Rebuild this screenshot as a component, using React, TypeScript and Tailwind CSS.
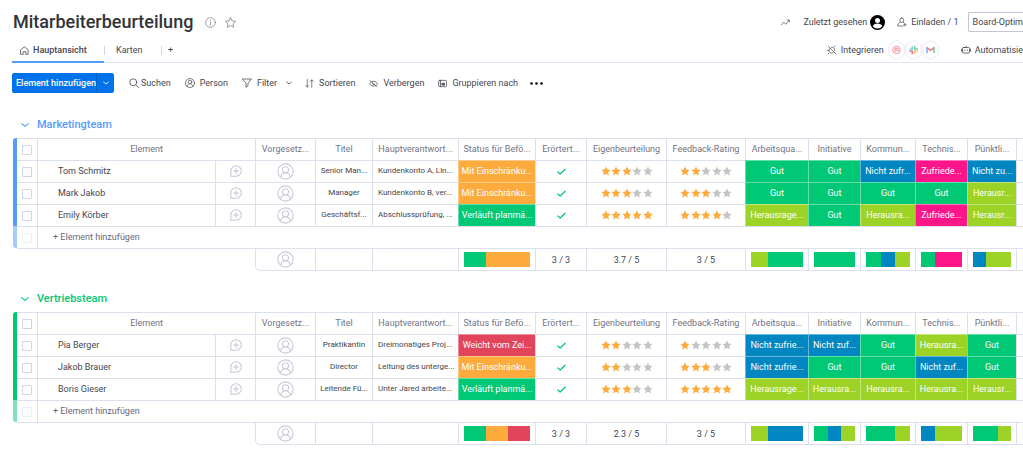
import type { ReactNode } from "react";

type Tone = "green" | "blue" | "pink" | "lime" | "orange" | "red";
type Label = [string, Tone];
type Segment = [Tone, number];

const tones: Record<Tone, string> = {
  green: "bg-[#00c875]",
  blue: "bg-[#0086c0]",
  pink: "bg-[#ff158a]",
  lime: "bg-[#9cd326]",
  orange: "bg-[#fdab3d]",
  red: "bg-[#e2445c]",
};

interface Person {
  name: string;
  title: string;
  duty: string;
  status: Label;
  self: number;
  feedback: number;
  skills: Label[];
}

interface Team {
  name: string;
  text: string;
  bar: string;
  lightBar: string;
  people: Person[];
  statusSummary: Segment[];
  self: string;
  skillSummaries: Segment[][];
}

const GOOD: Label = ["Gut", "green"];

const teams: Team[] = [
  {
    name: "Marketingteam",
    text: "text-[#579bfc]",
    bar: "bg-[#579bfc]",
    lightBar: "bg-[#a6cbfd]",
    people: [
      {
        name: "Tom Schmitz",
        title: "Senior Man...",
        duty: "Kundenkonto A, Lin...",
        status: ["Mit Einschränku...", "orange"],
        self: 3,
        feedback: 2,
        skills: [GOOD, GOOD, ["Nicht zufr...", "blue"], ["Zufriede...", "pink"], ["Nicht zu...", "blue"]],
      },
      {
        name: "Mark Jakob",
        title: "Manager",
        duty: "Kundenkonto B, ver...",
        status: ["Mit Einschränku...", "orange"],
        self: 3,
        feedback: 3,
        skills: [GOOD, GOOD, GOOD, GOOD, ["Herausr...", "lime"]],
      },
      {
        name: "Emily Körber",
        title: "Geschäftsf...",
        duty: "Abschlussprüfung, ...",
        status: ["Verläuft planmä...", "green"],
        self: 5,
        feedback: 4,
        skills: [["Herausrage...", "lime"], GOOD, ["Herausra...", "lime"], ["Zufriede...", "pink"], ["Herausr...", "lime"]],
      },
    ],
    statusSummary: [["green", 1], ["orange", 2]],
    self: "3.7",
    skillSummaries: [
      [["lime", 1], ["green", 2]],
      [["green", 3]],
      [["green", 1], ["blue", 1], ["lime", 1]],
      [["green", 1], ["pink", 2]],
      [["blue", 1], ["lime", 2]],
    ],
  },
  {
    name: "Vertriebsteam",
    text: "text-[#00c875]",
    bar: "bg-[#00c875]",
    lightBar: "bg-[#7fe3ba]",
    people: [
      {
        name: "Pia Berger",
        title: "Praktikantin",
        duty: "Dreimonatiges Proj...",
        status: ["Weicht vom Zei...", "red"],
        self: 2,
        feedback: 1,
        skills: [["Nicht zufrie...", "blue"], ["Nicht zuf...", "blue"], GOOD, ["Herausra...", "lime"], GOOD],
      },
      {
        name: "Jakob Brauer",
        title: "Director",
        duty: "Leitung des unterge...",
        status: ["Mit Einschränku...", "orange"],
        self: 2,
        feedback: 3,
        skills: [["Nicht zufrie...", "blue"], GOOD, GOOD, ["Nicht zuf...", "blue"], GOOD],
      },
      {
        name: "Boris Gieser",
        title: "Leitende Fü...",
        duty: "Unter Jared arbeite...",
        status: ["Verläuft planmä...", "green"],
        self: 3,
        feedback: 5,
        skills: [["Herausrage...", "lime"], ["Herausra...", "lime"], ["Herausra...", "lime"], ["Herausra...", "lime"], ["Herausr...", "lime"]],
      },
    ],
    statusSummary: [["green", 1], ["orange", 1], ["red", 1]],
    self: "2.3",
    skillSummaries: [
      [["lime", 1], ["blue", 2]],
      [["green", 1], ["blue", 1], ["lime", 1]],
      [["green", 2], ["lime", 1]],
      [["blue", 1], ["lime", 2]],
      [["green", 2], ["lime", 1]],
    ],
  },
];

const columns = [
  "Vorgesetz...",
  "Titel",
  "Hauptverantwort...",
  "Status für Befö...",
  "Erörtert...",
  "Eigenbeurteilung",
  "Feedback-Rating",
  "Arbeitsqua...",
  "Initiative",
  "Kommun...",
  "Technis...",
  "Pünktli...",
];

function Icon({ className, children, width = 1.5 }: { className: string; children: ReactNode; width?: number }) {
  return (
    <svg
      viewBox="0 0 20 20"
      fill="none"
      stroke="currentColor"
      strokeWidth={width}
      strokeLinecap="round"
      strokeLinejoin="round"
      aria-hidden="true"
      className={`shrink-0 ${className}`}
    >
      {children}
    </svg>
  );
}

function Chevron({ className }: { className: string }) {
  return (
    <Icon className={className} width={2.8}>
      <path d="M2 6.500l8 7 8-7" />
    </Icon>
  );
}

function PersonIcon({ className, width = 1.3 }: { className: string; width?: number }) {
  return (
    <Icon className={className} width={width}>
      <circle cx="10" cy="10" r="9" />
      <circle cx="10" cy="8" r="3.6" />
      <path d="M4.2 16.6c.5-2.6 2-4.2 4-4.8M15.8 16.6c-.5-2.6-2-4.2-4-4.8" />
    </Icon>
  );
}

function Stars({ value }: { value: number }) {
  return (
    <div className="mx-auto flex w-[52px] justify-between" role="img" aria-label={`${value} von 5 Sternen`}>
      {[1, 2, 3, 4, 5].map((n) => (
        <svg
          key={n}
          viewBox="0 0 20 20"
          className={n <= value ? "size-[10px] fill-[#fdab3d]" : "size-[10px] fill-[#c4c4c4]"}
        >
          <path d="M10 1l2.800 6 6.400.8-4.700 4.500 1.200 6.500L10 15.600l-5.700 3.200 1.200-6.500L.8 7.800 7.200 7z" />
        </svg>
      ))}
    </div>
  );
}

function Segments({ parts }: { parts: Segment[] }) {
  return (
    <div className="mx-[5px] flex h-[15px]">
      {parts.map(([tone, share], i) => (
        <div key={i} className={tones[tone]} style={{ flexGrow: share }} />
      ))}
    </div>
  );
}

function Check({ label, faint = false }: { label: string; faint?: boolean }) {
  return (
    <input
      type="checkbox"
      aria-label={label}
      className={`mx-auto block size-[10px] appearance-none rounded-[1px] border bg-white ${
        faint ? "border-[#eceef5]" : "border-[#d0d4e4]"
      }`}
    />
  );
}

const cell = "h-[22px] border-t border-l border-[#dcdfec] p-0 pb-px text-center overflow-hidden";
const footCell = "h-[23px] border-t border-b border-l border-[#dcdfec] p-0 text-center overflow-hidden";

function LabelCell({ label: [text, tone] }: { label: Label }) {
  return (
    <td className={`h-[22px] overflow-hidden border-t border-l border-white/40 p-0 pb-px text-center text-white ${tones[tone]}`}>
      {text}
    </td>
  );
}

function TeamTable({ team }: { team: Team }) {
  return (
    <section className="pl-[13px]">
      <h2 className={`flex h-[18px] items-center ${team.text}`}>
        <button type="button" className="flex items-center gap-2 pl-2 text-[11px] font-medium">
          <Chevron className="size-[8px]" />
          {team.name}
        </button>
      </h2>
      <table className="mt-1 w-full table-fixed border-separate border-spacing-0 text-[9px] leading-[14px] whitespace-nowrap text-[#45464d]">
        <colgroup>
          <col className="w-[4px]" />
          <col className="w-[20px]" />
          <col className="w-[178px]" />
          <col className="w-[40px]" />
          <col className="w-[60px]" />
          <col className="w-[57px]" />
          <col className="w-[86px]" />
          <col className="w-[77px]" />
          <col className="w-[51px]" />
          <col className="w-[80px]" />
          <col className="w-[79px]" />
          <col className="w-[63px]" />
          <col className="w-[52px]" />
          <col className="w-[55px]" />
          <col className="w-[52px]" />
          <col className="w-[49px]" />
          <col />
        </colgroup>
        <thead className="text-[#72737f]">
          <tr>
            <td className={`rounded-tl-[3px] p-0 ${team.bar}`} />
            <td className="h-[22px] border-t border-[#dcdfec] p-0">
              <Check label={`Alle in ${team.name} auswählen`} />
            </td>
            <th colSpan={2} className={`${cell} font-normal`}>
              Element
            </th>
            {columns.map((c) => (
              <th key={c} className={`${cell} font-normal`}>
                {c}
              </th>
            ))}
            <td className={cell} />
          </tr>
        </thead>
        <tbody>
          {team.people.map((p) => (
            <tr key={p.name}>
              <td className={`p-0 ${team.bar}`} />
              <td className="h-[22px] border-t border-[#dcdfec] p-0">
                <Check label={`${p.name} auswählen`} />
              </td>
              <td className="h-[22px] border-t border-l border-[#dcdfec] p-0 pb-px pl-5 text-left">{p.name}</td>
              <td className={cell}>
                <button type="button" aria-label="Unterhaltung beginnen" className="mx-auto block text-[#c3c6d4]">
                  <Icon className="size-[12px]" width={1.7}>
                    <path d="M1.400 18.600V10a8.700 8.700 0 1 1 8.700 8.600zM10 6v8M6 10h8" />
                  </Icon>
                </button>
              </td>
              <td className={`${cell} text-[#c9ccd8]`}>
                <PersonIcon className="mx-auto size-[17px]" />
              </td>
              <td className={`${cell} text-[8px]`}>{p.title}</td>
              <td className={`${cell} px-[5px] text-left text-[8px]`}>{p.duty}</td>
              <LabelCell label={p.status} />
              <td className={`${cell} text-[#00c875]`}>
                <Icon className="mx-auto size-[9px]" width={2.8}>
                  <path d="M2 11l5 4.500L18 5" />
                </Icon>
              </td>
              <td className={cell}>
                <Stars value={p.self} />
              </td>
              <td className={cell}>
                <Stars value={p.feedback} />
              </td>
              {p.skills.map((s, i) => (
                <LabelCell key={i} label={s} />
              ))}
              <td className={cell} />
            </tr>
          ))}
          <tr>
            <td className={`rounded-bl-[3px] p-0 ${team.lightBar}`} />
            <td className="h-[22px] border-t border-[#dcdfec] p-0">
              <Check faint label="Neues Element auswählen" />
            </td>
            <td colSpan={15} className="h-[22px] border-t border-l border-[#dcdfec] p-0 pb-px pl-[15px] text-left text-[#676879]">
              <button type="button">+ Element hinzufügen</button>
            </td>
          </tr>
        </tbody>
        <tfoot className="text-[9px] text-[#45464d]">
          <tr>
            <td className="p-0" />
            <td colSpan={3} className="border-t border-[#dcdfec] p-0" />
            <td className="h-[23px] rounded-bl-[5px] border border-r-0 border-[#dcdfec] p-0 text-[#c9ccd8]">
              <PersonIcon className="mx-auto size-[17px]" />
            </td>
            <td className={footCell} />
            <td className={footCell} />
            <td className={footCell}>
              <Segments parts={team.statusSummary} />
            </td>
            <td className={footCell}>3 / 3</td>
            <td className={footCell}>{team.self} / 5</td>
            <td className={footCell}>3 / 5</td>
            {team.skillSummaries.map((parts, i) => (
              <td key={i} className={footCell}>
                <Segments parts={parts} />
              </td>
            ))}
            <td className={footCell} />
          </tr>
        </tfoot>
      </table>
    </section>
  );
}

function Hexagon({ children }: { children: ReactNode }) {
  return (
    <svg viewBox="0 0 34 40" className="h-[20px] w-[17px] shrink-0" aria-hidden="true">
      <path
        d="M14.500 2.200q2.500-1.400 5 0l10.600 6q2.400 1.400 2.400 4.200v15.200q0 2.800-2.400 4.200l-10.600 6q-2.500 1.400-5 0l-10.600-6q-2.400-1.400-2.400-4.200V12.400q0-2.800 2.400-4.200z"
        fill="#fff"
        stroke="#e3e6ef"
        strokeWidth="1.600"
      />
      {children}
    </svg>
  );
}

export default function App() {
  return (
    <main className="overflow-hidden bg-white pb-3 font-['Roboto',sans-serif] text-[9px] leading-[14px] whitespace-nowrap text-[#45464d]">
      <header className="flex h-[40px] items-center pt-1 pl-[13px]">
        <h1 className="text-[18px] leading-6 font-medium text-[#323338]">Mitarbeiterbeurteilung</h1>
        <button type="button" aria-label="Info" className="ml-[12px] text-[#83848f]">
          <Icon className="size-[11px]" width={1.4}>
            <circle cx="10" cy="10" r="8.800" />
            <path d="M10 9v5.500M10 5.800v.4" />
          </Icon>
        </button>
        <button type="button" aria-label="Favorit" className="ml-[9px] text-[#83848f]">
          <Icon className="size-[11px]" width={1.5}>
            <path d="M10 1l2.800 6 6.400.8-4.700 4.500 1.200 6.500L10 15.600l-5.700 3.200 1.200-6.500L.8 7.800 7.200 7z" />
          </Icon>
        </button>
        <div className="ml-auto flex items-center">
          <button type="button" aria-label="Aktivität">
            <Icon className="size-[9px]" width={1.500}>
              <path d="M1 15l5-6 5 5 7-9M14 4.500h4.500V9" />
            </Icon>
          </button>
          <button type="button" className="ml-[13px] flex items-center gap-[3px]">
            Zuletzt gesehen
            <svg viewBox="0 0 30 30" className="size-[15px]" aria-hidden="true">
              <circle cx="15" cy="15" r="15" />
              <circle cx="15" cy="10.800" r="5" fill="#fff" />
              <path d="M5.500 22.500c1-4 5-5.500 9.500-5.500s8.500 1.500 9.500 5.500a12 12 0 0 1-19 0z" fill="#fff" />
            </svg>
          </button>
          <button type="button" className="ml-[12px] flex items-center gap-1">
            <Icon className="size-[10px]" width={1.400}>
              <path d="M9.500 2a4 4.500 0 0 1 0 9 4 4.500 0 0 1 0-9zM6.500 10.500C3 11.500 1.500 14 1.500 18H12M12.500 11l2 1M16 13v5M13.500 15.500h5" />
            </Icon>
            Einladen / 1
          </button>
          <button type="button" className="ml-[9px] h-5 rounded-l-[2px] border border-r-0 border-[#c3c6d4] pl-[4px]">
            Board-Optim
          </button>
        </div>
      </header>

      <nav className="flex h-[23px] items-stretch">
        <div className="w-3 shrink-0" />
        <button type="button" className="flex w-[92px] shrink-0 items-center gap-[4px] border-b-2 border-[#579bfc] pb-px pl-2 font-medium">
          <Icon className="size-[9px]" width={1.700}>
            <path d="M2 8.500L10 1.500l8 7V18.500h-5v-6H7v6H2z" />
          </Icon>
          Hauptansicht
        </button>
        <div className="flex grow items-center border-b border-[#dfe5f2] pb-[2px]">
          <button type="button" className="w-[57px] border-l border-[#d0d4e4] pl-[11px] text-left leading-[9px]">
            Karten
          </button>
          <button type="button" aria-label="Ansicht hinzufügen" className="border-l border-[#d0d4e4] pl-[6px] leading-[9px]">
            +
          </button>
          <button type="button" className="ml-auto flex items-center gap-1">
            <Icon className="size-[10px]" width={1.400}>
              <path d="M3 3l15 15M1 11.500l3-1M8.500 4.500C12 3 16.500 7 15 11M5.500 7c-2.500 3-1.500 6.500.5 8 2 1.500 4.500 1.500 6.500 0M4 16l-2 2M14 4l2-2" />
            </Icon>
            Integrieren
          </button>
          <div className="ml-[4px] flex">
            <Hexagon>
              <circle cx="17" cy="20" r="7.500" fill="none" stroke="#f98c9b" strokeWidth="2" />
              <path d="M14 24v-7.500h6V24M14 20.500h6" fill="none" stroke="#f98c9b" strokeWidth="2" />
            </Hexagon>
            <Hexagon>
              <g strokeWidth="3.400" strokeLinecap="round">
                <path d="M14.500 13.500v4.500M10.500 18h3" stroke="#7bd3f1" />
                <path d="M19.500 13v5M20 18h4.500" stroke="#79cfa6" />
                <path d="M19.500 22v4.500M20 22h4.500" stroke="#f2cb74" />
                <path d="M14.500 22v5M10 22h4" stroke="#ee7d9b" />
              </g>
            </Hexagon>
            <Hexagon>
              <g fill="none" strokeWidth="3.200">
                <path d="M10 26V15" stroke="#7fadf6" />
                <path d="M24 26V15" stroke="#72c897" />
                <path d="M9.500 14.500L17 21l7.500-6.500" stroke="#f27b71" />
              </g>
            </Hexagon>
          </div>
          <button type="button" className="ml-[22px] flex items-center gap-[4px]">
            <Icon className="size-[10px]" width={1.600}>
              <path d="M5 5h10q2 0 2 2v7q0 2-2 2H5q-2 0-2-2V7q0-2 2-2zM10 5V2.500M1 8.500v4M19 8.500v4M7.500 10v1M12.500 10v1" />
            </Icon>
            Automatisie
          </button>
        </div>
      </nav>

      <div className="flex h-[40px] items-center pl-3">
        <div className="flex h-5 w-[102px] rounded-[2px] bg-[#0073ea] text-white">
          <button type="button" className="w-[85px] border-r border-[#0060c4] pl-[4px] text-left font-medium">
            Element hinzufügen
          </button>
          <button type="button" aria-label="Weitere Optionen" className="grid grow place-items-center">
            <Chevron className="size-[6px]" />
          </button>
        </div>
        <button type="button" className="ml-[15px] flex items-center gap-[2px]">
          <Icon className="size-[10px]" width={1.600}>
            <circle cx="8.500" cy="8.500" r="7" />
            <path d="M14 14l5 5" />
          </Icon>
          Suchen
        </button>
        <button type="button" className="ml-[14px] flex items-center gap-[5px]">
          <PersonIcon className="size-[10px]" width={1.400} />
          Person
        </button>
        <button type="button" className="ml-[14px] flex items-center gap-[5px]">
          <Icon className="size-[10px]" width={1.500}>
            <path d="M1 2h18l-7 8.500v5L8 18.500v-8z" />
          </Icon>
          Filter
        </button>
        <button type="button" aria-label="Filteroptionen" className="ml-[9px]">
          <Chevron className="size-[6px]" />
        </button>
        <button type="button" className="ml-[13px] flex items-center gap-[5px]">
          <Icon className="size-[9px]" width={1.500}>
            <path d="M5 1v17M1.500 14.500L5 18l3.500-3.500M15 18.500V2M11.500 5.500L15 2l3.500 3.500" />
          </Icon>
          Sortieren
        </button>
        <button type="button" className="ml-[14px] flex items-center gap-[5px]">
          <Icon className="size-[9px]" width={1.600}>
            <path d="M2 4l16 13M7 5.500c5-1.500 9 .5 12 5-1 1.500-2 2.500-3.500 3.500M4 7.500L1 10.500c3.500 5 8 6 12.500 4.700M8 9c-1 3 2 5 4 3" />
          </Icon>
          Verbergen
        </button>
        <button type="button" className="ml-[14px] flex items-center gap-[5px]">
          <Icon className="size-[9px]" width={1.700}>
            <path d="M4 3h13q2 0 2 2v10q0 2-2 2H4q-2.500 0-2.500-2V5Q1.500 3 4 3zM5.500 3v14" />
            <path d="M9.500 9.500h5v4h-5z" fill="currentColor" />
          </Icon>
          Gruppieren nach
        </button>
        <button type="button" aria-label="Mehr" className="ml-[12px]">
          <svg viewBox="0 0 26 6" className="h-[3px] w-[13px]" aria-hidden="true">
            <circle cx="3" cy="3" r="2.600" />
            <circle cx="13" cy="3" r="2.600" />
            <circle cx="23" cy="3" r="2.600" />
          </svg>
        </button>
      </div>

      <div className="flex flex-col gap-[19px] pt-[13px]">
        {teams.map((t) => (
          <TeamTable key={t.name} team={t} />
        ))}
      </div>
    </main>
  );
}
